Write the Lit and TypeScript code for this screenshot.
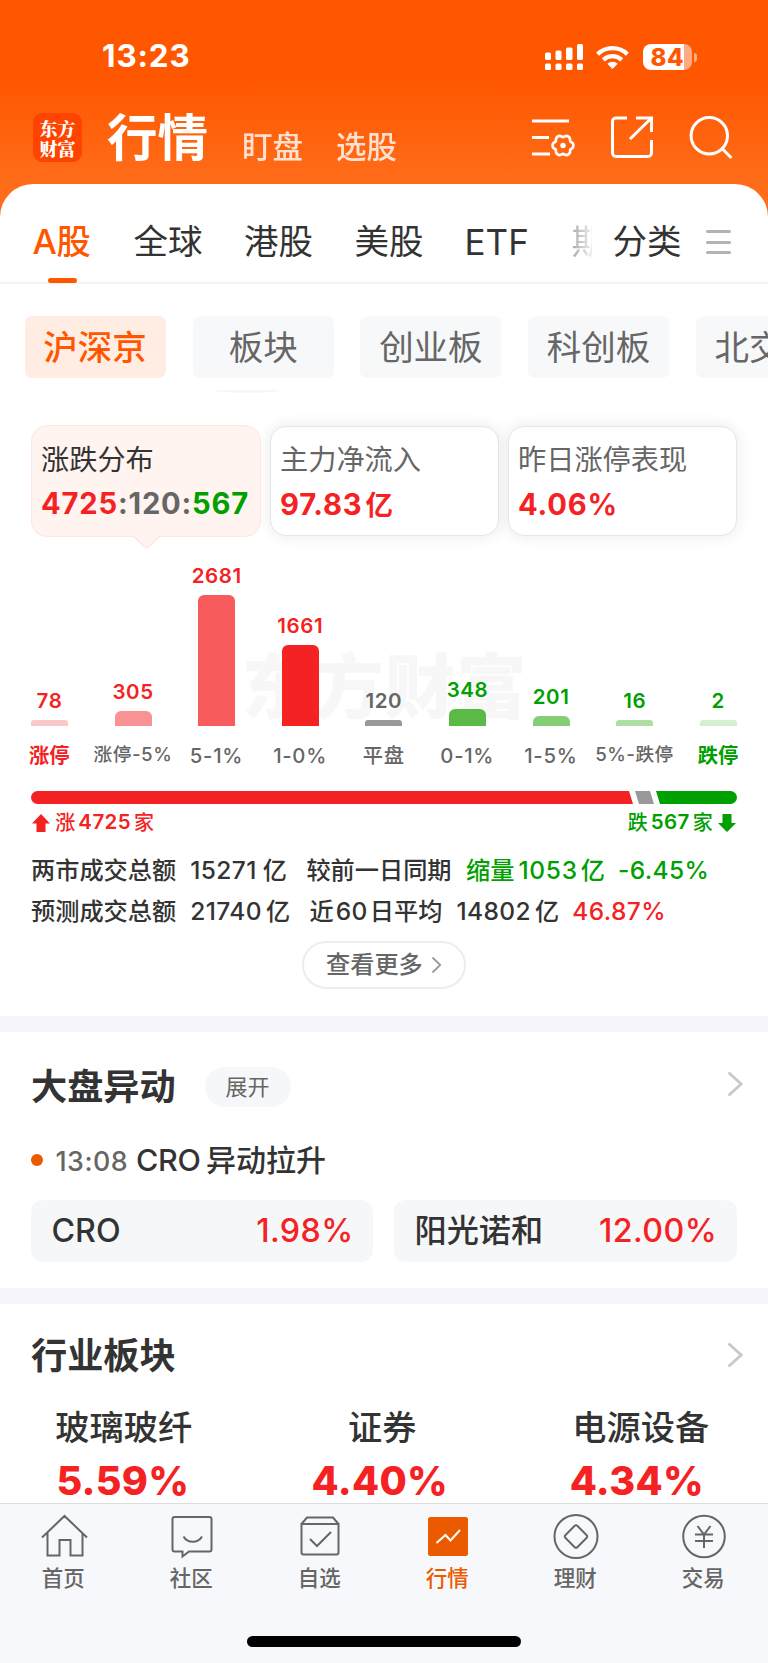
import { LitElement, html, css, svg } from "lit";
import { customElement } from "lit/decorators.js";
import { classMap } from "lit/directives/class-map.js";

const bars = [
  { v: "78", label: "涨停", h: 6, c: "#fbc8c9", t: "red", lt: "red strong" },
  { v: "305", label: "涨停-5%", h: 15, c: "#f99294", t: "red", lt: "small" },
  { v: "2681", label: "5-1%", h: 131, c: "#f85b5c", t: "red", lt: "" },
  { v: "1661", label: "1-0%", h: 81, c: "#f52223", t: "red", lt: "" },
  { v: "120", label: "平盘", h: 6, c: "#999999", t: "gray", lt: "" },
  { v: "348", label: "0-1%", h: 17, c: "#5aba45", t: "green", lt: "" },
  { v: "201", label: "1-5%", h: 10, c: "#84ce75", t: "green", lt: "" },
  { v: "16", label: "5%-跌停", h: 6, c: "#addfa3", t: "green", lt: "small" },
  { v: "2", label: "跌停", h: 6, c: "#d6efd1", t: "green", lt: "green strong" },
];

/* Six-lobed gear outline around (cx, cy). */
const gear = (cx: number, cy: number) => {
  const pts: string[] = [];
  for (let i = 0; i < 72; i++) {
    const a = (i / 72) * Math.PI * 2;
    const r = 9.6 + 0.95 * Math.cos(6 * a) - 0.2 * Math.cos(12 * a);
    pts.push(`${(cx + r * Math.cos(a)).toFixed(2)} ${(cy + r * Math.sin(a)).toFixed(2)}`);
  }
  return `M${pts.join("L")}Z`;
};

const navIcons = {
  home: svg`<path d="M2 23.500 24.500 2 47 23.500M7.500 19V41.500h12V26h11v15.500h12V19"/>`,
  chat: svg`<path d="M6.500 3h35a2 2 0 0 1 2 2v30.500a2 2 0 0 1-2 2H21l-6.500 5v-5h-8a2 2 0 0 1-2-2V5a2 2 0 0 1 2-2z"/><path d="M15.500 22.500c4 7 14.500 7 18.500 0"/>`,
  star: svg`<path d="M5.500 10v28.500a2 2 0 0 0 2 2h33a2 2 0 0 0 2-2V10zM5.500 10l5.500-6.500h26L42.500 10"/><path d="M14 25l7 7 14-14"/>`,
  market: svg`<rect class="solid" x="4" y="3" width="40" height="39" rx="2.500"/><path class="white" d="M12.500 29l9-8 5 5.500L36 16"/>`,
  money: svg`<circle cx="24" cy="22.500" r="21.500"/><path d="M22.700 11.800 13.300 21.200a1.800 1.800 0 0 0 0 2.600l9.400 9.400a1.800 1.800 0 0 0 2.600 0l9.400-9.400a1.800 1.800 0 0 0 0-2.600l-9.400-9.400a1.800 1.800 0 0 0-2.600 0z"/>`,
  trade: svg`<circle cx="24" cy="22.500" r="20.800"/><path d="M17.500 12 24 20.500 30.500 12M15 20.500h18M15 27h18M24 20.500V34"/>`,
};

const nav = [
  { label: "首页", icon: navIcons.home },
  { label: "社区", icon: navIcons.chat },
  { label: "自选", icon: navIcons.star },
  { label: "行情", icon: navIcons.market, on: true },
  { label: "理财", icon: navIcons.money },
  { label: "交易", icon: navIcons.trade },
];

@customElement("app-root")
export class AppRoot extends LitElement {
  static styles = css`
    :host {
      display: block;
      width: 768px;
      height: 1663px;
      overflow: hidden;
      font-family: Inter, "Noto Sans CJK SC", sans-serif;
      color: #333;
      line-height: 1;
      white-space: nowrap;
    }
    * { box-sizing: border-box; }
    svg { display: block; flex: none; }
    .page {
      display: flex;
      flex-direction: column;
      height: 1663px;
      background: linear-gradient(#ff5700 0, #ff5700 80px, #ff6d1a 184px, #ff6d1a 240px, #fff 240px);
    }
    .red { color: #f52223; }
    .green { color: #00a000; }
    .gray { color: #666; }

    .status {
      flex: none;
      height: 114px;
      display: flex;
      align-items: center;
      padding: 0 71px 0 102px;
      color: #fff;
    }
    .time { flex: 1; font-size: 31.300px; font-weight: 700; letter-spacing: 0.900px; }
    .wifi { margin: 0 14px 0 13px; }
    .battery { display: flex; align-items: center; }
    .level {
      width: 49px;
      height: 26px;
      border-radius: 8px;
      background: linear-gradient(90deg, #fff 41px, #ffab80 41px);
      color: #ff5700;
      font-size: 24px;
      line-height: 27px;
      font-weight: 800;
      padding-left: 7.500px;
      letter-spacing: 0.500px;
    }
    .cap { width: 3px; height: 9px; margin-left: 2px; border-radius: 0 3px 3px 0; background: #ffab80; }

    .top { flex: none; height: 70px; display: flex; align-items: flex-start; padding: 0 34px 0 33px; color: #fff; }
    .logo {
      width: 49px;
      height: 49px;
      margin-top: -1px;
      border-radius: 9px;
      background: #ff4400;
      font: 900 18px/20px "Noto Serif CJK SC", "Noto Sans CJK SC", sans-serif;
      padding: 5px 0 0 6.500px;
      white-space: normal;
    }
    .title { width: 135px; margin-left: 25px; font-size: 50.500px; line-height: 47px; font-weight: 700; }
    .sub { width: 94px; font-size: 30.500px; line-height: 65px; opacity: 0.8; font-weight: 500; }
    .actions { display: flex; margin-left: auto; }

    .panel { flex: none; height: 1319px; background: #fff; border-radius: 33px 33px 0 0; overflow: hidden; }
    .tabs {
      height: 100px;
      border-bottom: 2px solid #f3f3f4;
      display: flex;
      padding-left: 32.500px;
      font-size: 34.500px;
      line-height: 116px;
    }
    .tab { width: 110.500px; }
    .tab.on {
      width: 101px;
      height: 98px;
      color: #ff5700;
      font-weight: 500;
      font-size: 34.300px;
      letter-spacing: -0.200px;
      display: flex;
      flex-direction: column;
    }
    .tab.on::after { content: ""; flex: none; width: 29px; height: 5px; margin: -22px 0 0 15.500px; border-radius: 2.500px; background: #ff5700; }
    .etf { width: 107px; font-size: 35px; margin-left: -0.500px; }
    .fade { width: 20px; overflow: hidden; color: transparent; background: linear-gradient(90deg, #aaa, #eee); background-clip: text; -webkit-background-clip: text; }
    .sort { margin-left: 21px; }
    .burger { margin: 46px 0 0 24px; display: flex; flex-direction: column; gap: 7.500px; }
    .burger i { width: 25px; height: 3px; border-radius: 1.500px; background: #b3b3b3; }

    .chips { display: flex; gap: 26.700px; padding: 32px 0 0 25px; overflow: hidden; }
    .chip {
      flex: none;
      width: 141px;
      height: 61.500px;
      border-radius: 7px;
      background: #f7f8fa;
      color: #666;
      font-size: 34.500px;
      line-height: 63px;
      text-align: center;
    }
    .chip.on { background: #ffede4; color: #ff5700; font-weight: 500; padding-right: 1px; }
    .arc { width: 66px; height: 2.500px; margin: 12.500px 0 0.500px 214px; border-radius: 0 0 30px 30px / 0 0 3px 3px; background: #f7f7f8; }

    .cards { display: flex; gap: 9px; margin: 32px 0 0 31px; align-items: center; }
    .card {
      width: 229px;
      height: 110px;
      border: 1px solid #e6e6e6;
      border-radius: 16px;
      box-shadow: 0 0 16px rgba(0, 0, 0, 0.090);
      background: #fff;
      padding: 17.500px 0 0 9px;
      font-size: 28.200px;
      line-height: 32px;
      color: #666;
    }
    .card.on {
      position: relative;
      width: 230px;
      height: 112px;
      border: 1.500px solid #fee7dd;
      box-shadow: none;
      background: #fff4f0;
      color: #333;
      padding-top: 18px;
    }
    .tail { position: absolute; left: 101px; top: 109px; }
    .num { font-size: 29.200px; font-weight: 700; line-height: 32px; margin-top: 12.500px; letter-spacing: 0.800px; display: flex; align-items: center; }
    .yi { font-size: 27.500px; margin-left: 3px; }

    .chart { position: relative; height: 189px; display: grid; grid-template-columns: repeat(9, 83.600px); align-items: end; padding-left: 7.700px; }
    .mark { position: absolute; left: 242px; top: 116px; font-size: 70px; line-height: 70px; font-weight: 900; letter-spacing: 1.500px; color: #f7f7f7; }
    .col { position: relative; display: flex; flex-direction: column; align-items: center; }
    .val { font-size: 20.500px; line-height: 20px; font-weight: 600; letter-spacing: 0.600px; margin-bottom: 8.500px; }
    .bar { width: 37px; border-radius: 6px 6px 0 0; }
    .bar.low { border-radius: 3px 3px 0 0; }
    .labels { display: grid; grid-template-columns: repeat(9, 83.600px); padding-left: 7.500px; text-align: center; height: 65px; font-size: 20.300px; line-height: 59px; color: #666; font-weight: 500; letter-spacing: 0.700px; }
    .labels .small { font-size: 18.700px; line-height: 58px; letter-spacing: 0.500px; }
    .labels .strong { letter-spacing: 0; font-weight: 600; }
    .labels .red { color: #f52223; }
    .labels .green { color: #00a000; }
    .ratio { margin-left: 31px; }
    .legend { display: flex; align-items: center; justify-content: space-between; height: 38px; margin-bottom: 8px; padding: 0 32px; font-size: 20px; font-weight: 500; }
    .legend div { display: flex; align-items: center; }
    .legend b { font-weight: 600; font-size: 20.500px; letter-spacing: 0.400px; margin: 0 3px; }
    .stats { display: flex; height: 41px; align-items: center; padding-left: 31px; font-size: 24.200px; font-weight: 500; line-height: 41px; }
    .stats b { font-weight: 550; font-size: 24.500px; letter-spacing: 0.400px; }
    .amt { margin-left: 14px; }
    .unit { margin-left: 6px; }
    .next { margin-left: 19.500px; }
    .shrink { margin-left: 14.500px; }
    .shrink b, .near b { margin: 0 3px 0 4px; }
    .stats .shrink b { letter-spacing: 0.700px; }
    .near b { margin: 0 2px; }
    .tight { margin-left: 4px; }
    .pc { margin-left: 13px; }
    .more {
      display: flex;
      align-items: center;
      width: 163.500px;
      height: 48px;
      margin: 9px 0 27px 302px;
      border: 2px solid #ededed;
      border-radius: 24px;
      padding: 1px 0 0 22px;
      font-size: 24.200px;
      font-weight: 500;
      color: #666;
    }
    .more svg { margin-left: 8px; }
    .band { height: 16.500px; background: #f6f7fa; }
    .head { display: flex; align-items: center; height: 110px; padding: 0 25px 0 31px; }
    .head.second { height: 103px; margin-bottom: -5px; }
    .head h2 { margin: 0; width: 174px; font-size: 36.200px; font-weight: 700; padding-top: 1px; }
    .pill { width: 86px; height: 40px; border-radius: 20px; background: #f6f7fa; color: #666; font-size: 22px; line-height: 40px; text-align: center; padding-right: 1px; }
    .head svg { margin: 0 0 6px auto; }
    .head.second svg { margin-bottom: 1px; }
    .event { display: flex; align-items: center; height: 36px; padding-left: 31px; font-size: 30px; font-weight: 500; }
    .dot { width: 12px; height: 12px; border-radius: 6px; background: #ec5a00; margin-right: 12.500px; }
    .event time { width: 80.500px; font-size: 26.800px; font-weight: 550; color: #666; padding-top: 3px; letter-spacing: 0.500px; }
    .event .code { width: 70px; font-size: 30.500px; font-weight: 550; letter-spacing: -0.300px; }
    .boxes { display: grid; grid-template-columns: 342px 342.500px; gap: 21px; padding: 22px 31px 26px; }
    .box { display: flex; justify-content: space-between; align-items: center; height: 61.500px; border-radius: 12px; background: #f6f7f9; padding: 0 19.500px 0 20.500px; font-size: 32.200px; font-weight: 500; }
    .box .red { letter-spacing: 0.400px; font-weight: 550; }
    .trio { display: grid; grid-template-columns: repeat(3, 258.500px); margin-left: -5.500px; text-align: center; font-size: 34.200px; font-weight: 500; }
    .trio div { height: 52px; line-height: 52px; }
    .trio .pct { font-size: 39.500px; font-weight: 800; letter-spacing: 0.300px; line-height: 54px; margin-left: -5px; }
    .trio .pct:nth-child(4) { margin-left: -2px; }
    .trio .pct:nth-child(6) { margin-left: -8px; }

    .dock { flex: none; height: 160px; background: #f7f8fb; border-top: 1.500px solid #dedfe1; }
    .items { display: grid; grid-template-columns: repeat(6, 128px); height: 132px; }
    .item { display: flex; flex-direction: column; align-items: center; padding-top: 10px; color: #666; font-size: 21.500px; font-weight: 500; }
    .item svg { width: 48px; height: 45px; fill: none; stroke: currentColor; stroke-width: 2; }
    .item span { margin-top: 6.500px; line-height: 24px; margin-right: 1.500px; }
    .item.on { color: #ec5a00; }
    .item .solid { fill: #ec5a00; stroke: none; }
    .item .white { stroke: #fff; stroke-width: 2; }
    .homebar { width: 274px; height: 10.500px; border-radius: 5.500px; background: #000; margin-left: 247px; }
  `;

  private chevron(w: number, h: number, color: string, sw: number) {
    return html`<svg width=${w} height=${h} viewBox="0 0 ${w} ${h}" fill="none" stroke=${color} stroke-width=${sw}>
      <path d="M1.500 1.500 ${w - 1.8} ${h / 2} 1.500 ${h - 1.5}" />
    </svg>`;
  }

  render() {
    return html`<div class="page">
      <div class="status">
        <div class="time">13:23</div>
        <svg width="38" height="26" viewBox="0 0 38 26" fill="#fff">
          <rect x="0" y="8.500" width="6" height="7.500" rx="1.500" /><rect x="10.500" y="6.500" width="6" height="9.500" rx="1.500" />
          <rect x="21" y="3.500" width="6.500" height="12.500" rx="1.500" /><rect x="32" y="0" width="6" height="16" rx="1.500" />
          <rect x="0" y="19.500" width="6" height="6.500" rx="1.500" /><rect x="10.500" y="19.500" width="6" height="6.500" rx="1.500" />
          <rect x="21" y="19.500" width="6.500" height="6.500" rx="1.500" /><rect x="32" y="19.500" width="6" height="6.500" rx="1.500" />
        </svg>
        <svg class="wifi" width="33" height="24" viewBox="0 0 33 24">
          <g fill="none" stroke="#fff" stroke-width="4.300"><path d="M1.600 9.200a21.500 21.500 0 0 1 29.800 0" /><path d="M7.300 14.900a13.300 13.300 0 0 1 18.400 0" /></g>
          <path d="M11.300 18.700a7.600 7.600 0 0 1 10.400 0l-5.200 5.300z" fill="#fff" />
        </svg>
        <div class="battery"><div class="level">84</div><div class="cap"></div></div>
      </div>
      <div class="top">
        <div class="logo">东方<br />财富</div>
        <div class="title">行情</div>
        <div class="sub">盯盘</div>
        <div class="sub">选股</div>
        <div class="actions">
          <svg width="202" height="46" viewBox="0 0 202 46" fill="none" stroke="#fff" stroke-width="3">
            <path d="M0 7h37M0 23.500h17M0 40h18" />
            <path d=${gear(31, 31.5)} stroke-width="2.700" />
            <circle cx="31" cy="31.500" r="2.700" fill="#fff" stroke="none" />
            <path d="M95 4H84a3.500 3.500 0 0 0-3.500 3.500v31A3.500 3.500 0 0 0 84 42.500h32a3.500 3.500 0 0 0 3.500-3.500V26M104 4h15.500v14M119 4.500 98 25" />
            <circle cx="177.300" cy="21.800" r="18.200" /><path d="M190.500 35l9 9" />
          </svg>
        </div>
      </div>
      <div class="panel">
        <div class="tabs">
          <div class="tab on">A股</div>
          <div class="tab">全球</div><div class="tab">港股</div><div class="tab">美股</div>
          <div class="etf">ETF</div><div class="fade">期</div>
          <div class="sort">分类</div>
          <div class="burger"><i></i><i></i><i></i></div>
        </div>
        <div class="chips">
          ${["沪深京", "板块", "创业板", "科创板", "北交所"].map((c, i) => html`<div class=${classMap({ chip: true, on: i === 0 })}>${c}</div>`)}
        </div>
        <div class="arc"></div>
        <div class="cards">
          <div class="card on">
            <div>涨跌分布</div>
            <div class="num"><span class="red">4725</span><span class="gray">:120:</span><span class="green">567</span></div>
            <svg class="tail" width="27" height="13" viewBox="0 0 27 13"><path d="M0 .8 11 11.500q2.500 1.500 5 0L27 .8" fill="#fff4f0" stroke="#fee7dd" stroke-width="1.400" /><path d="M0 0h27" stroke="#fff4f0" stroke-width="2" /></svg>
          </div>
          <div class="card"><div>主力净流入</div><div class="num red">97.83<span class="yi">亿</span></div></div>
          <div class="card"><div>昨日涨停表现</div><div class="num red">4.06%</div></div>
        </div>
        <div class="chart">
          <div class="mark">东方财富</div>
          ${bars.map((b) => html`<div class="col"><div class="val ${b.t}">${b.v}</div><div class=${classMap({ bar: true, low: b.h < 8 })} style="height:${b.h}px;background:${b.c}"></div></div>`)}
        </div>
        <div class="labels">${bars.map((b) => html`<div class=${b.lt}>${b.label}</div>`)}</div>
        <svg class="ratio" width="706" height="13" viewBox="0 0 706 13">
          <path d="M6.500 0H598l4 13H6.500a6.500 6.500 0 0 1 0-13z" fill="#f52223" />
          <path d="M604 0h15l4 13h-15z" fill="#999" />
          <path d="M625 0h74.500a6.500 6.500 0 0 1 0 13H629z" fill="#00a000" />
        </svg>
        <div class="legend">
          <div class="red"><svg width="18" height="18" viewBox="0 0 18 18"><path d="M9 0l9 9.500h-4.500V18h-9V9.500H0z" fill="#f52223" /></svg>&nbsp;涨<b>4725</b>家</div>
          <div class="green">跌<b>567</b>家&nbsp;<svg width="18" height="18" viewBox="0 0 18 18"><path d="M9 18 0 9h4.500V0h9v9H18z" fill="#00a000" /></svg></div>
        </div>
        <div class="stats">
          <span>两市成交总额</span><b class="amt">15271</b><span class="unit">亿</span><span class="next">较前一日同期</span><span class="green shrink">缩量<b>1053</b>亿</span><b class="green pc">-6.45%</b>
        </div>
        <div class="stats">
          <span>预测成交总额</span><b class="amt">21740</b><span class="unit tight">亿</span><span class="next near">近<b>60</b>日平均</span><b class="amt">14802</b><span class="tight">亿</span><b class="red pc">46.87%</b>
        </div>
        <div class="more">查看更多${this.chevron(11, 18, "#999", 1.8)}</div>
        <div class="band"></div>
        <div class="head"><h2>大盘异动</h2><div class="pill">展开</div>${this.chevron(16, 26, "#c8c8c8", 2.8)}</div>
        <div class="event"><span class="dot"></span><time>13:08</time><span class="code">CRO</span>异动拉升</div>
        <div class="boxes">
          <div class="box"><span>CRO</span><span class="red">1.98%</span></div>
          <div class="box"><span>阳光诺和</span><span class="red">12.00%</span></div>
        </div>
        <div class="band"></div>
        <div class="head second"><h2>行业板块</h2>${this.chevron(16, 26, "#c8c8c8", 2.8)}</div>
        <div class="trio">
          <div>玻璃玻纤</div><div>证券</div><div>电源设备</div>
          <div class="pct red">5.59%</div><div class="pct red">4.40%</div><div class="pct red">4.34%</div>
        </div>
      </div>
      <div class="dock">
        <div class="items">
          ${nav.map((n) => html`<div class=${classMap({ item: true, on: !!n.on })}><svg viewBox="0 0 48 45">${n.icon}</svg><span>${n.label}</span></div>`)}
        </div>
        <div class="homebar"></div>
      </div>
    </div>`;
  }
}
